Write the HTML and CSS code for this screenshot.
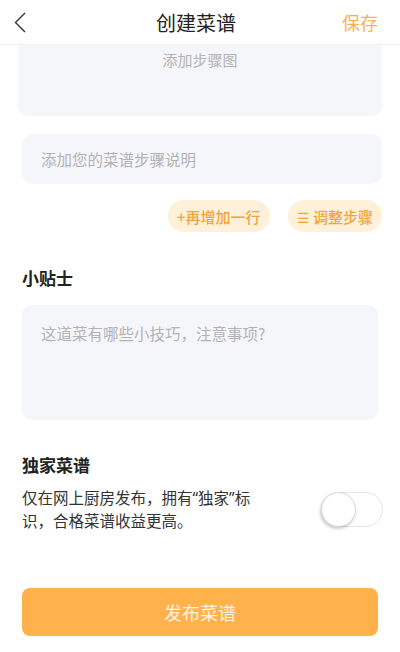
FILE: index.html
```html
<!DOCTYPE html>
<html lang="zh-CN">
<head>
    <meta charset="UTF-8">
    <meta name="viewport" content="width=device-width, initial-scale=1.0">
    <title>创建菜谱</title>
    <link rel="stylesheet" href="styles.css">
</head>
<body>
    <header class="topbar">
        <a class="back" href="#">
            <svg width="12" height="21" viewBox="0 0 12 21">
                <polyline points="11,1 1.5,10.5 11,20" fill="none" stroke="#333" stroke-width="1.4"/>
            </svg>
        </a>
        <h1>创建菜谱</h1>
        <span class="save">保存</span>
    </header>

    <main class="editor">
        <!-- step block -->
        <div class="step-photo">添加步骤图</div>
        <div class="step-desc">添加您的菜谱步骤说明</div>
        <div class="step-actions">
            <button class="pill">+再增加一行</button>
            <button class="pill"><span class="bars">☰</span> 调整步骤</button>
        </div>

        <!-- tips -->
        <h2 class="section-title tips-title">小贴士</h2>
        <div class="tips-box">这道菜有哪些小技巧，注意事项?</div>

        <!-- exclusive -->
        <h2 class="section-title excl-title">独家菜谱</h2>
        <div class="excl-row">
            <p class="excl-text">仅在网上厨房发布，拥有“独家”标识，合格菜谱收益更高。</p>
            <div class="toggle"><div class="knob"></div></div>
        </div>

        <button class="publish">发布菜谱</button>
    </main>
</body>
</html>
```

FILE: styles.css
```css
body {
    margin: 0;
    background-color: #ffffff;
    color: #333333;
    font-family: "Noto Sans CJK SC", "Noto Sans", sans-serif;
}
.topbar {
    height: 45px;
    display: flex;
    align-items: center;
    justify-content: space-between;
    padding: 0 22px 0 14px;
    border-bottom: 1px solid #f2f2f2;
    box-sizing: border-box;
}
.back {
    display: flex;
    width: 40px;
}
.topbar h1 {
    margin: 0;
    font-size: 20px;
    font-weight: 400;
    color: #222;
}
.save {
    width: 40px;
    text-align: right;
    font-size: 18px;
    color: #f7b24f;
}
.editor {
    display: flex;
    flex-direction: column;
}
.step-photo {
    margin: 0 18px;
    height: 71px;
    background-color: #f5f6fa;
    border-radius: 0 0 10px 10px;
    text-align: center;
    font-size: 15px;
    color: #b3b3b3;
    padding-top: 4px;
    box-sizing: border-box;
}
.step-desc {
    margin: 18px 18px 0 22px;
    height: 50px;
    line-height: 50px;
    background-color: #f5f6fa;
    border-radius: 10px;
    padding-left: 19px;
    font-size: 15.5px;
    color: #b3b3b3;
}
.step-actions {
    display: flex;
    justify-content: flex-end;
    gap: 18px;
    margin: 16px 18px 0 0;
}
.pill {
    height: 32px;
    padding: 0 9px;
    border: none;
    border-radius: 16px;
    background-color: #fff0da;
    color: #f0a43c;
    font-family: inherit;
    font-size: 15px;
    font-weight: 500;
}
.bars {
    font-size: 14px;
}
.section-title {
    margin: 0 22px;
    font-size: 17px;
    line-height: 24px;
    font-weight: 700;
    color: #222;
}
.tips-title {
    margin-top: 34px;
}
.tips-box {
    margin: 15px 22px 0;
    height: 115px;
    background-color: #f5f6fa;
    border-radius: 10px;
    padding: 17px 19px;
    box-sizing: border-box;
    font-size: 15.5px;
    color: #b3b3b3;
}
.excl-title {
    margin-top: 33px;
}
.excl-row {
    display: flex;
    justify-content: space-between;
    align-items: flex-start;
    margin: 10px 17px 0 22px;
}
.excl-text {
    margin: 0;
    width: 236px;
    font-family: "Noto Sans", "Noto Sans CJK SC", sans-serif;
    font-size: 15.5px;
    line-height: 23px;
    color: #333;
}
.toggle {
    margin-top: 5px;
    width: 62px;
    height: 35px;
    border: 1px solid #e4e4e4;
    border-radius: 18px;
    box-sizing: border-box;
    position: relative;
    background-color: #fff;
}
.knob {
    position: absolute;
    left: -1px;
    top: -1px;
    width: 35px;
    height: 35px;
    box-sizing: border-box;
    border-radius: 50%;
    background-color: #fff;
    border: 1px solid #d6d6d6;
    box-shadow: -1px 2px 3px rgba(0, 0, 0, 0.2);
}
.publish {
    margin: 55px 22px 0;
    height: 48px;
    border: none;
    border-radius: 8px;
    background-color: #ffb24c;
    color: #fff3e0;
    font-family: inherit;
    font-size: 18px;
}
```
